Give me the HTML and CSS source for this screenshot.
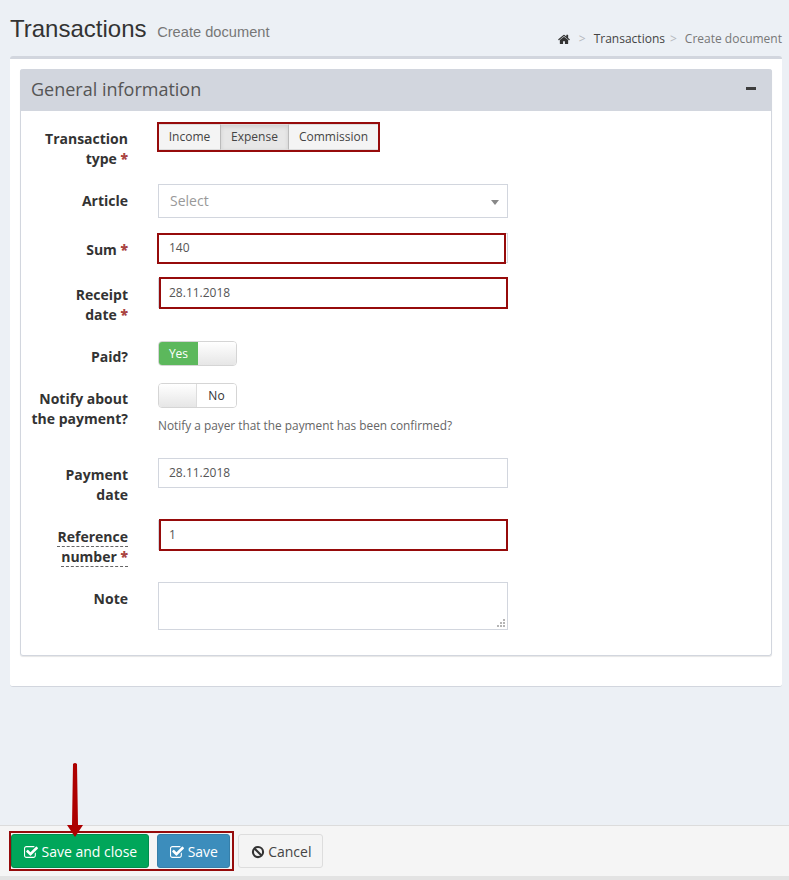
FILE: index.html
```html
<!DOCTYPE html>
<html lang="en">
<head>
<meta charset="utf-8">
<title>Transactions</title>
<link rel="stylesheet" href="styles.css">
</head>
<body>
<main class="page">
  <header class="page-head">
    <h1 class="title">Transactions <small class="subtitle">Create document</small></h1>
    <nav class="crumbs">
      <svg class="home" viewBox="0 0 1664 1664"><path d="M1408 992v480q0 26-19 45t-45 19h-384v-384H704v384H320q-26 0-45-19t-19-45V992q0-1 .5-3t.5-3l575-474 575 474q1 2 1 6zm223-69l-62 74q-8 9-21 11h-3q-13 0-21-7L832 424 140 1001q-12 8-24 7-13-2-21-11l-62-74q-8-10-7-23.5t11-21.5l719-599q32-26 76-26t76 26l244 204V288q0-14 9-23t23-9h192q14 0 23 9t9 23v408l219 182q10 8 11 21.5t-7 23.5z"/></svg>
      <span class="sep first">&gt;</span>
      <span class="crumb-link">Transactions</span>
      <span class="sep">&gt;</span>
      <span class="crumb-here">Create document</span>
    </nav>
  </header>
  <section class="card">
    <div class="panel">
      <div class="panel-head">
        <h2 class="panel-title">General information</h2>
        <span class="minus"></span>
      </div>
      <form class="panel-body">
        <div class="row">
          <label class="label">Transaction<br>type <b class="req">*</b></label>
          <div class="control">
            <div class="btn-group">
              <span class="seg seg-income">Income</span><span class="seg seg-active">Expense</span><span class="seg seg-comm">Commission</span>
              <i class="mark mark-group"></i>
            </div>
          </div>
        </div>
        <div class="row">
          <label class="label">Article</label>
          <div class="control">
            <div class="select">Select<i class="caret"></i></div>
          </div>
        </div>
        <div class="row">
          <label class="label">Sum <b class="req">*</b></label>
          <div class="control">
            <input class="input" value="140"><i class="mark mark-sum"></i>
          </div>
        </div>
        <div class="row">
          <label class="label">Receipt<br>date <b class="req">*</b></label>
          <div class="control">
            <input class="input" value="28.11.2018"><i class="mark mark-field"></i>
          </div>
        </div>
        <div class="row">
          <label class="label">Paid?</label>
          <div class="control">
            <div class="toggle"><span class="toggle-on">Yes</span><span class="toggle-handle"></span></div>
          </div>
        </div>
        <div class="row row-notify">
          <label class="label">Notify about<br>the payment?</label>
          <div class="control">
            <div class="toggle"><span class="toggle-handle handle-left"></span><span class="toggle-off">No</span></div>
            <p class="help">Notify a payer that the payment has been confirmed?</p>
          </div>
        </div>
        <div class="row">
          <label class="label">Payment<br>date</label>
          <div class="control">
            <input class="input" value="28.11.2018">
          </div>
        </div>
        <div class="row">
          <label class="label"><span class="dashed">Reference</span><br><span class="dashed">number <b class="req">*</b></span></label>
          <div class="control">
            <input class="input" value="1"><i class="mark mark-field"></i>
          </div>
        </div>
        <div class="row row-last">
          <label class="label">Note</label>
          <div class="control">
            <textarea class="textarea"></textarea>
            <svg class="grip" viewBox="0 0 8 8"><path d="M6 0h2v2H6zM3 3h2v2H3zM6 3h2v2H6zM0 6h2v2H0zM3 6h2v2H3zM6 6h2v2H6z"/></svg>
          </div>
        </div>
      </form>
    </div>
  </section>
</main>
<footer class="footer">
  <div class="save-box">
    <button class="btn btn-green" type="button"><svg class="ico" viewBox="0 0 1664 1664"><path d="M1408 930v318q0 119-84.500 203.500T1120 1536H288q-119 0-203.500-84.500T0 1248V416q0-119 84.500-203.500T288 128h832q63 0 117 25 15 7 18 23 3 17-9 29l-49 49q-10 10-23 10-3 0-9-2-23-6-45-6H288q-66 0-113 47t-47 113v832q0 66 47 113t113 47h832q66 0 113-47t47-113V994q0-13 9-22l64-64q10-10 23-10 6 0 12 3 20 8 20 29zm231-489l-814 814q-24 24-57 24t-57-24L281 825q-24-24-24-57t24-57l110-110q24-24 57-24t57 24l263 263 647-647q24-24 57-24t57 24l110 110q24 24 24 57t-24 57z"/></svg> Save and close</button>
    <button class="btn btn-blue" type="button"><svg class="ico" viewBox="0 0 1664 1664"><path d="M1408 930v318q0 119-84.500 203.500T1120 1536H288q-119 0-203.500-84.500T0 1248V416q0-119 84.500-203.500T288 128h832q63 0 117 25 15 7 18 23 3 17-9 29l-49 49q-10 10-23 10-3 0-9-2-23-6-45-6H288q-66 0-113 47t-47 113v832q0 66 47 113t113 47h832q66 0 113-47t47-113V994q0-13 9-22l64-64q10-10 23-10 6 0 12 3 20 8 20 29zm231-489l-814 814q-24 24-57 24t-57-24L281 825q-24-24-24-57t24-57l110-110q24-24 57-24t57 24l263 263 647-647q24-24 57-24t57 24l110 110q24 24 24 57t-24 57z"/></svg> Save</button>
    <svg class="arrow" viewBox="0 0 16 74"><path d="M6 1q2-2 4 0l1 61h5l-8 12L0 62h5z"/></svg>
  </div>
  <button class="btn btn-cancel" type="button"><svg class="ico ico-ban" viewBox="0 0 16 16"><circle cx="8" cy="8" r="5.8"/><path d="M4 4l8 8"/></svg> Cancel</button>
</footer>
</body>
</html>
```
FILE: styles.css
```css
* { box-sizing: border-box; }
html, body { margin: 0; height: 880px; overflow: hidden; }
body {
  display: flex;
  flex-direction: column;
  background: #ecf0f5;
  font-family: "Open Sans", sans-serif;
  font-size: 12px;
  color: #333;
}
.page { flex: 1; padding: 0 7px 0 10px; }

.page-head {
  height: 56px;
  display: flex;
  justify-content: space-between;
  align-items: flex-end;
}
.title {
  margin: 0 0 9px;
  font: 400 24px/30px "Liberation Sans", sans-serif;
  color: #333;
}
.subtitle {
  margin-left: 4px;
  font-size: 14.65px;
  color: #777;
}
.crumbs {
  display: flex;
  align-items: center;
  margin-bottom: 9px;
  font-size: 12px;
  line-height: 16px;
  color: #777;
}
.home { width: 12px; height: 12px; fill: #333; margin-right: 9px; }
.sep { color: #b5b8bd; margin-right: 8px; }
.crumb-link { color: #444; margin-right: 5px; }
.crumb-here { color: #777; }

.card {
  height: 631px;
  background: #fff;
  border-top: 3px solid #d2d6de;
  border-bottom: 1px solid #d2d6de;
  border-radius: 3px;
  padding: 10px;
}
.panel {
  height: 587px;
  border: 1px solid #d2d6de;
  border-top: 0;
  border-radius: 3px;
  box-shadow: 0 1px 1px rgba(0,0,0,.1);
}
.panel-head {
  height: 42px;
  margin: 0 -1px;
  padding: 0 16px 0 11px;
  display: flex;
  align-items: center;
  justify-content: space-between;
  background: #d2d6de;
  border-radius: 3px 3px 0 0;
}
.panel-title {
  margin: 0 0 2px;
  font-size: 18px;
  font-weight: 400;
  line-height: 40px;
  color: #555;
}
.minus { width: 10px; height: 3px; background: #3d3d3d; margin-top: -3px; }

.panel-body { padding-top: 11px; }
.row { display: flex; margin-bottom: 15px; min-height: 27px; }
.row-notify { height: 61px; }
.row-last { margin-bottom: 0; }
.label {
  width: 107px;
  padding-top: 7px;
  text-align: right;
  font-size: 14px;
  font-weight: 700;
  line-height: 20px;
  color: #333;
}
.req { color: #a94442; }
.dashed { border-bottom: 1px dashed #666; }
.control { position: relative; width: 350px; margin-left: 30px; }

.mark { position: absolute; border: 2px solid #960b0b; pointer-events: none; }
.mark-group { left: -1px; right: -1px; top: -2px; bottom: -2px; }
.mark-sum { left: -1px; top: 0; width: 349px; height: 31px; }
.mark-field { left: 1px; top: -1px; width: 349px; height: 32px; }

.btn-group {
  position: relative;
  display: flex;
  width: 221px;
  height: 26px;
  margin-top: 2px;
}
.seg {
  display: block;
  height: 26px;
  font-size: 12px;
  line-height: 24px;
  text-align: center;
  background: #f4f4f4;
  border: 1px solid #ddd;
  color: #444;
}
.seg-income { width: 62px; border-right: 0; }
.seg-active { width: 69px; background: #e7e7e7; border-color: #ddd #bbb; box-shadow: inset 0 2px 4px rgba(0,0,0,.1); }
.seg-comm { width: 90px; border-left: 0; }

.select {
  position: relative;
  height: 34px;
  padding: 0 11px;
  font-size: 14px;
  line-height: 32px;
  color: #999;
  background: #fff;
  border: 1px solid #d2d6de;
}
.caret {
  position: absolute;
  right: 8px;
  top: 15px;
  border: 4px solid transparent;
  border-top: 5px solid #888;
  border-bottom: 0;
}
.input {
  display: block;
  width: 350px;
  height: 30px;
  padding: 0 10px 2px;
  font: 12px "Open Sans", sans-serif;
  color: #555;
  background: #fff;
  border: 1px solid #d2d6de;
  border-radius: 0;
  outline: 0;
}
.textarea {
  display: block;
  width: 350px;
  height: 48px;
  padding: 5px 10px;
  font: 12px "Open Sans", sans-serif;
  background: #fff;
  border: 1px solid #d2d6de;
  border-radius: 0;
  outline: 0;
  resize: none;
}
.grip { position: absolute; right: 3px; bottom: 3px; width: 8px; height: 8px; fill: #b5b5b5; }

.toggle {
  display: flex;
  width: 79px;
  height: 25px;
  margin-top: 1px;
  border: 1px solid #d5d5d5;
  border-radius: 4px;
  overflow: hidden;
  font-size: 12px;
  line-height: 23px;
  background: #fff;
}
.toggle-on { width: 39px; text-align: center; color: #fff; background: #5cb85c; }
.toggle-off { flex: 1; text-align: center; color: #333; background: #fff; }
.toggle-handle { flex: 1; background: linear-gradient(#fff, #e6e6e6); }
.handle-left { flex: 0 0 38px; border-right: 1px solid #ddd; }
.help { margin: 9px 0 0; font-size: 11.85px; line-height: 16px; color: #666; white-space: nowrap; }

.footer {
  height: 55px;
  flex: none;
  display: flex;
  align-items: flex-start;
  padding: 5px 0 0 9px;
  gap: 4px;
  background: #f5f5f5;
  border-top: 1px solid #dcdcdc;
  border-bottom: 4px solid #e3e3e3;
}
.save-box {
  position: relative;
  display: flex;
  gap: 8px;
  width: 225px;
  height: 40px;
  padding-top: 1px;
  border: 2px solid #960b0b;
}
.btn {
  height: 34px;
  margin: 0;
  padding: 1px 0 0 1px;
  font: 14px/31px "Open Sans", sans-serif;
  border: 1px solid transparent;
  border-radius: 3px;
  white-space: nowrap;
}
.btn-green { width: 138px; color: #fff; background: #00a65a; border-color: #008d4c; }
.btn-blue { width: 73px; color: #fff; background: #3c8dbc; border-color: #367fa9; }
.btn-cancel { width: 85px; margin-top: 3px; color: #444; background: #f4f4f4; border-color: #ddd; }
.ico { width: 14px; height: 14px; fill: currentColor; vertical-align: -2px; }
.ico-ban { fill: none; stroke: #333; stroke-width: 2.4; }
.arrow { position: absolute; left: 56px; top: -70px; width: 16px; height: 74px; fill: #ad0000; }
```
